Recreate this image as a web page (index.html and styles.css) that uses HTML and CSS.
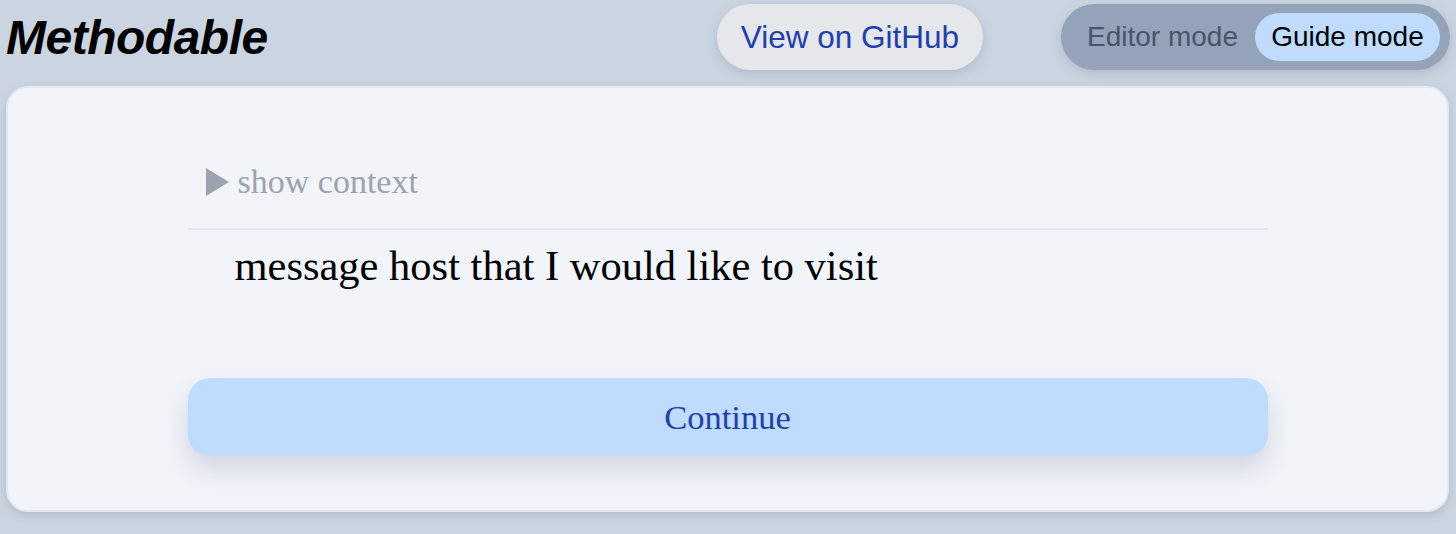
FILE: index.html
```html
<!DOCTYPE html>
<html>
<head>
<meta charset="utf-8">
<link rel="stylesheet" href="styles.css">
</head>
<body>
<header class="topbar">
  <h1 class="brand">Methodable</h1>
  <a class="github" href="#">View on GitHub</a>
  <div class="modes">
    <span class="mode">Editor mode</span>
    <span class="mode active">Guide mode</span>
  </div>
</header>
<main class="card">
  <div class="inner">
    <div class="context"><span class="tri"></span><span>show context</span></div>
    <div class="step">message host that I would like to visit</div>
    <button class="continue">Continue</button>
  </div>
</main>
</body>
</html>
```
FILE: styles.css
```css
html, body { margin: 0; padding: 0; }
body {
  background: #cbd5e1;
  width: 1456px;
  height: 534px;
  overflow: hidden;
  font-family: "Liberation Serif", "Times New Roman", serif;
}
.topbar {
  display: flex;
  align-items: center;
  height: 74px;
  padding: 0 6px 0 6px;
  gap: 78px;
}
.brand {
  margin: 0 auto 0 0;
  font-family: "Liberation Sans", Arial, sans-serif;
  font-weight: 700;
  font-style: italic;
  font-size: 48px;
  color: #000;
  letter-spacing: -0.5px;
}
.github {
  display: flex;
  align-items: center;
  justify-content: center;
  width: 266px;
  height: 66px;
  border-radius: 33px;
  background: #e5e7eb;
  color: #1e40af;
  text-decoration: none;
  font-family: "Liberation Sans", Arial, sans-serif;
  font-size: 31.5px;
  box-shadow: 0 4px 12px rgba(100, 116, 139, 0.25);
}
.modes {
  display: flex;
  align-items: center;
  width: 389px;
  height: 66px;
  box-sizing: border-box;
  padding: 0 10px 0 26px;
  border-radius: 33px;
  background: #94a3b8;
  justify-content: space-between;
  box-shadow: 0 4px 12px rgba(100, 116, 139, 0.25);
  font-family: "Liberation Sans", Arial, sans-serif;
  font-size: 28px;
}
.mode { color: #475569; }
.mode.active {
  display: flex;
  align-items: center;
  justify-content: center;
  width: 185px;
  height: 48px;
  border-radius: 24px;
  background: #bfdbfe;
  color: #000;
}
.card {
  display: block;
  margin: 12px 7px 0 6px;
  height: 426px;
  box-sizing: border-box;
  background: #f1f4f9;
  border: 2px solid #e2e8f0;
  border-radius: 22px;
  box-shadow: 0 4px 10px rgba(71, 85, 105, 0.18);
}
.inner {
  width: 1080px;
  margin: 0 auto;
  padding-top: 60px;
}
.context {
  display: flex;
  align-items: center;
  gap: 9px;
  padding: 0 0 12px 18px;
  height: 82px;
  border-bottom: 2px solid #e2e8f0;
  box-sizing: border-box;
  color: #9ca3af;
  font-size: 34px;
}
.tri {
  width: 0; height: 0;
  border-left: 23px solid #9ca3af;
  border-top: 14px solid transparent;
  border-bottom: 14px solid transparent;
}
.step {
  padding: 12px 0 0 47px;
  height: 148px;
  box-sizing: border-box;
  font-size: 42.5px;
  line-height: 48px;
  color: #000;
}
.continue {
  display: block;
  width: 100%;
  height: 78px;
  border: none;
  border-radius: 22px;
  background: #bfdbfe;
  color: #1e40af;
  font-family: "Liberation Serif", "Times New Roman", serif;
  font-size: 34.5px;
  box-shadow: 0 14px 24px rgba(100, 116, 139, 0.22);
}
```
